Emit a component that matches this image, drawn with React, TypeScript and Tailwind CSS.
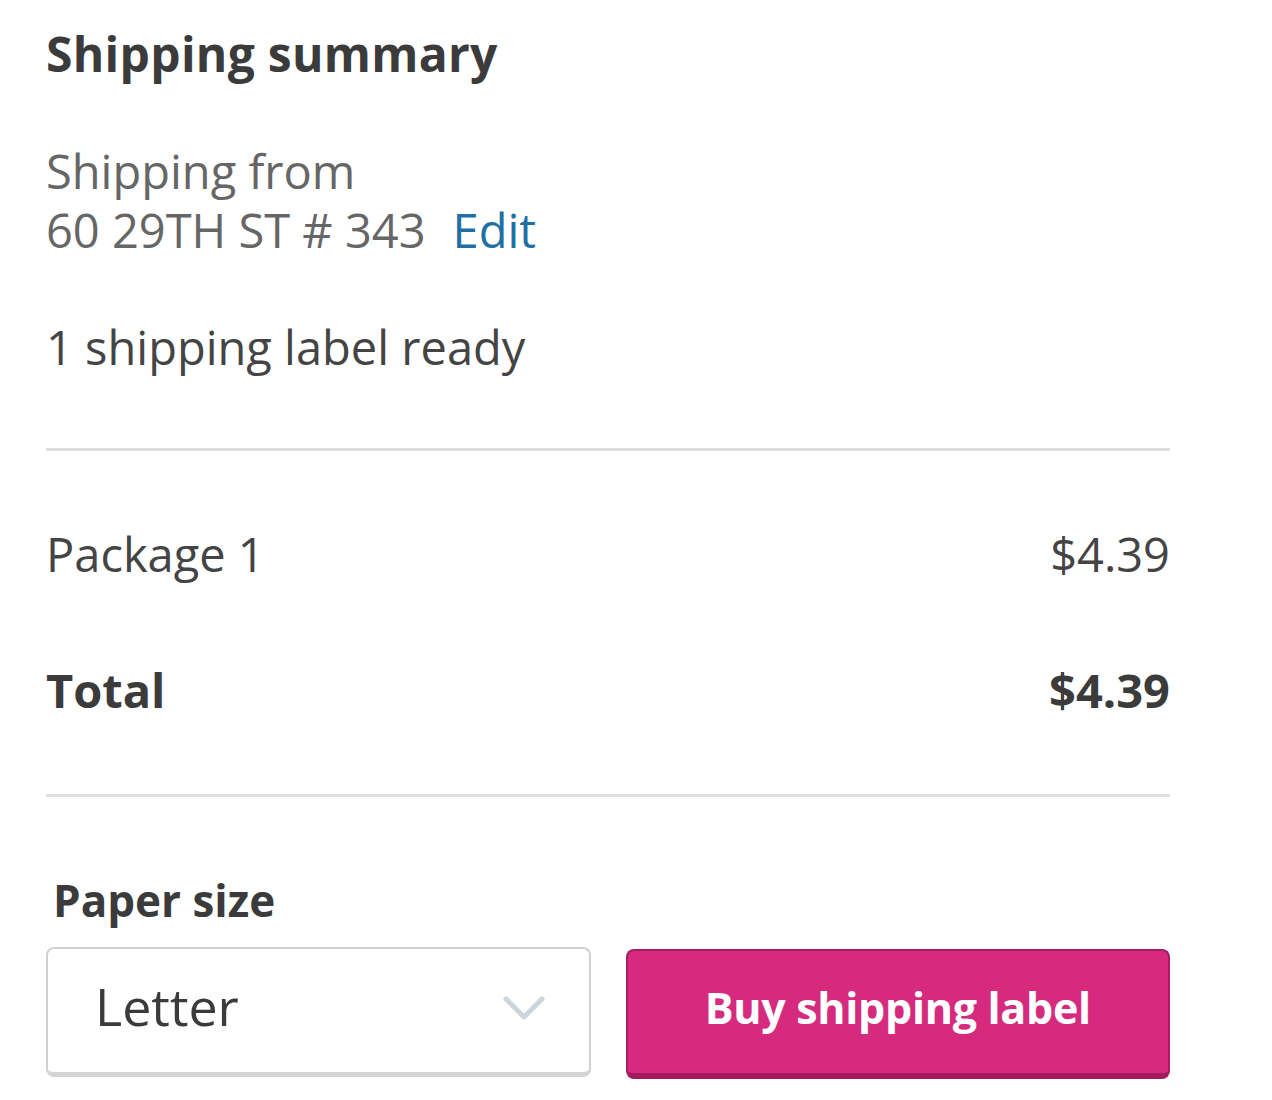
import React from "react";

export default function App() {
  return (
    <div className="w-[1272px] h-[1100px] bg-white overflow-hidden" style={{ fontFamily: '"Open Sans", "Noto Sans", sans-serif' }}>
      <div className="w-[1124px] ml-[46px] flex flex-col">
        <h1 className="mt-[24px] text-[48px] leading-[60px] font-bold text-[#3b3b3b] tracking-[0.3px]">Shipping summary</h1>
        <div className="mt-[58px] text-[47px] leading-[59px] text-[#666666]">
          <div>Shipping from</div>
          <div>
            60 29TH ST # 343<span className="ml-[27px] text-[#1f6fa5]">Edit</span>
          </div>
        </div>
        <div className="mt-[58px] text-[47px] leading-[59px] text-[#444444]">1 shipping label ready</div>
        <div className="mt-[71px] h-[3px] bg-[#dedede]" />
        <div className="mt-[74px] flex justify-between text-[47px] leading-[59px] text-[#444444]">
          <span>Package 1</span>
          <span>$4.39</span>
        </div>
        <div className="mt-[77px] flex justify-between text-[47px] leading-[59px] font-bold text-[#3b3b3b]">
          <span>Total</span>
          <span>$4.39</span>
        </div>
        <div className="mt-[74px] h-[3px] bg-[#dedede]" />
        <div className="mt-[74px] ml-[7px] text-[44px] leading-[59px] font-bold text-[#3b3b3b]">Paper size</div>
        <div className="mt-[17px] flex items-start gap-[35px]">
          <div className="w-[545px] h-[130px] rounded-[8px] border-2 border-[#d0d0d0] border-b-[5px] border-b-[#d4d4d4] bg-white flex items-center justify-between pl-[47px] pr-[44px] pb-[10px]">
            <span className="text-[52px] leading-none text-[#3b3b3b]">Letter</span>
            <svg width="42" height="26" viewBox="0 0 42 26" fill="none" className="mt-[6px]">
              <path d="M3 3 L21 21 L39 3" stroke="#cbd5da" strokeWidth="5" strokeLinecap="round" strokeLinejoin="round" />
            </svg>
          </div>
          <button className="w-[545px] h-[130px] mt-[2px] rounded-[8px] bg-[#d62a7f] border-2 border-[#a81c62] border-b-[6px] border-b-[#a01a5d] flex items-center justify-center pb-[7px] text-white text-[43px] font-bold tracking-[-0.3px]">
            Buy shipping label
          </button>
        </div>
      </div>
    </div>
  );
}
